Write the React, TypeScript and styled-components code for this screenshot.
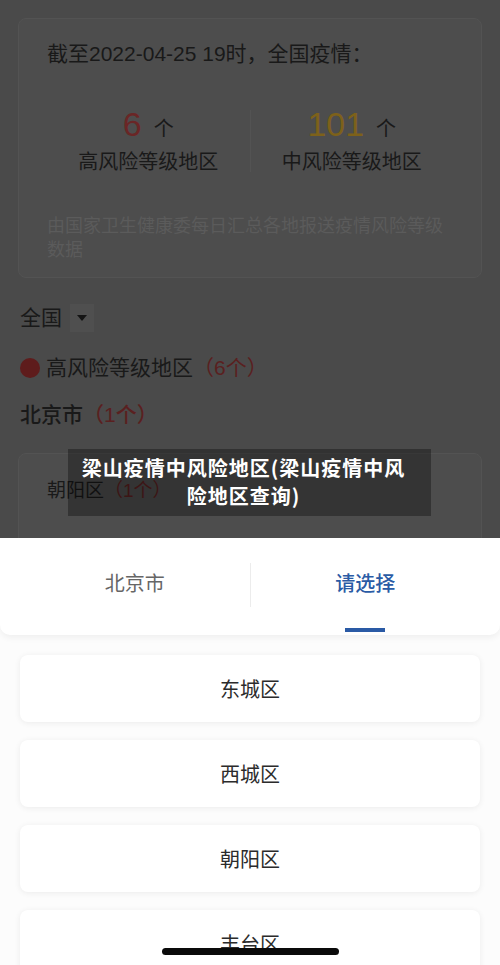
import styled, { createGlobalStyle } from 'styled-components';

const GlobalStyle = createGlobalStyle`
    html, body {
        margin: 0;
        padding: 0;
        background: #ffffff;
    }

    body {
        font-family: "Liberation Sans", "Noto Sans CJK SC", "Noto Sans", sans-serif;
    }
`;

const StyledPageRoot = styled.div`
    position: relative;
    width: 500px;
    height: 965px;
    overflow: hidden;

    display: flex;
    flex-direction: column;

    background-color: #ffffff;
`;

// dimmed page behind the sheet
const StyledDimmedArea = styled.div`
    position: relative;
    flex-shrink: 0;
    height: 538px;
    padding: 18px 18px 0;
    box-sizing: border-box;
    overflow: hidden;

    background-color: #4a4a4a;
    color: #191919;

    .summaryCard {
        height: 260px;
        padding: 20px 28px 0;
        box-sizing: border-box;

        border: 1px solid #535353;
        border-radius: 8px;
        background-color: #4d4d4d;

        &-title {
            font-size: 21px;
            line-height: 30px;
        }

        &-stats {
            margin-top: 36px;
            display: grid;
            grid-template-columns: 1fr 1px 1fr;
            align-items: center;
        }

        &-divider {
            height: 62px;
            background-color: #535353;
        }

        &-note {
            margin-top: 38px;
            color: #5b5b5b;
            font-size: 18px;
            line-height: 24px;
        }
    }

    .areaFilter {
        margin-top: 24px;
        display: flex;
        align-items: center;
        gap: 8px;

        font-size: 21px;
        line-height: 32px;
        padding-left: 2px;

        &-toggle {
            width: 24px;
            height: 28px;
            display: flex;
            align-items: center;
            justify-content: center;
            background-color: #4f4f4f;
        }
    }

    .levelRow {
        margin-top: 18px;
        display: flex;
        align-items: center;
        gap: 6px;
        padding-left: 2px;

        font-size: 21px;
        line-height: 32px;

        &-dot {
            width: 20px;
            height: 20px;
            border-radius: 50%;
            background-color: #5e1c1c;
        }
    }

    .cityRow {
        margin-top: 15px;
        padding-left: 2px;
        font-size: 21px;
        line-height: 32px;
        font-weight: 500;
    }

    .districtCard {
        margin-top: 22px;
        height: 120px;
        padding: 22px 28px 0;
        box-sizing: border-box;

        border: 1px solid #535353;
        border-radius: 8px;
        background-color: #4d4d4d;

        font-size: 19px;
        line-height: 30px;
    }
`;

const StyledCount = styled.span`
    color: #5a2020;
`;

const StyledStat = styled.div`
    display: flex;
    flex-direction: column;
    align-items: center;

    .stat-value {
        display: flex;
        align-items: baseline;
        gap: 12px;
        line-height: 38px;
    }

    .stat-number {
        color: ${({ color }) => color};
        font-size: 34px;
    }

    .stat-unit {
        font-size: 20px;
    }

    .stat-label {
        margin-top: 0;
        font-size: 20px;
        line-height: 28px;
    }
`;

const StyledCaption = styled.div`
    position: absolute;
    left: 68px;
    top: 449px;
    width: 363px;
    height: 67px;
    box-sizing: border-box;
    padding: 5px 12px 0 0;

    background-color: rgba(0, 0, 0, 0.32);
    color: #ffffff;
    text-align: center;
    font-family: "Noto Sans CJK SC", sans-serif;
    font-size: 20px;
    line-height: 28px;
    font-weight: 700;
    letter-spacing: 1px;
`;

const StyledSheet = styled.div`
    flex: 1;
    display: flex;
    flex-direction: column;
    background-color: #fcfcfc;
`;

const StyledTabBar = styled.div`
    height: 97px;
    padding: 0 20px;
    display: grid;
    grid-template-columns: 1fr 1px 1fr;
    align-items: center;

    background-color: #ffffff;
    border-radius: 0 0 10px 10px;
    box-shadow: 0 3px 6px rgba(0, 0, 0, 0.05);

    .tabBar-divider {
        height: 44px;
        margin-top: -4px;
        background-color: #ececec;
    }
`;

const StyledTab = styled.div<{ $active?: boolean }>`
    position: relative;
    height: 100%;
    display: flex;
    align-items: center;
    justify-content: center;
    padding-bottom: 8px;
    box-sizing: border-box;

    color: ${({ $active }) => ($active ? '#2a5ba5' : '#666666')};
    font-family: "Noto Sans CJK SC", sans-serif;
    font-size: 20px;
    font-weight: ${({ $active }) => ($active ? 500 : 400)};

    &::after {
        content: '';
        display: ${({ $active }) => ($active ? 'block' : 'none')};
        position: absolute;
        left: 50%;
        bottom: 3px;
        width: 40px;
        height: 4px;
        margin-left: -20px;
        background-color: #2a5aa5;
    }
`;

const StyledOptionList = styled.div`
    padding: 20px 20px 0;
    display: flex;
    flex-direction: column;
    gap: 18px;
`;

const StyledOption = styled.div`
    height: 67px;
    flex-shrink: 0;
    display: flex;
    align-items: center;
    justify-content: center;

    border-radius: 8px;
    background-color: #ffffff;
    box-shadow: 0 1px 6px rgba(0, 0, 0, 0.07);

    color: #2b2b2b;
    font-family: "Noto Sans CJK SC", sans-serif;
    font-size: 20px;
`;

const StyledHomeIndicator = styled.div`
    position: absolute;
    left: 162px;
    bottom: 10px;
    width: 177px;
    height: 7px;
    border-radius: 4px;
    background-color: #0a0a0a;
`;

const districts = ['东城区', '西城区', '朝阳区', '丰台区'];

function App() {
    return (
        <StyledPageRoot>
            <GlobalStyle />

            <StyledDimmedArea>
                <div className="summaryCard">
                    <div className="summaryCard-title">
                        截至2022-04-25 19时，全国疫情：
                    </div>

                    <div className="summaryCard-stats">
                        <StyledStat color="#6a2626">
                            <div className="stat-value">
                                <span className="stat-number">6</span>
                                <span className="stat-unit">个</span>
                            </div>
                            <div className="stat-label">高风险等级地区</div>
                        </StyledStat>

                        <div className="summaryCard-divider" />

                        <StyledStat color="#7d611a">
                            <div className="stat-value">
                                <span className="stat-number">101</span>
                                <span className="stat-unit">个</span>
                            </div>
                            <div className="stat-label">中风险等级地区</div>
                        </StyledStat>
                    </div>

                    <div className="summaryCard-note">
                        由国家卫生健康委每日汇总各地报送疫情风险等级数据
                    </div>
                </div>

                <div className="areaFilter">
                    全国
                    <span className="areaFilter-toggle">
                        <svg width="12" height="8" viewBox="0 0 12 8">
                            <path d="M1 1h10L6 7z" fill="#141414" />
                        </svg>
                    </span>
                </div>

                <div className="levelRow">
                    <span className="levelRow-dot" />
                    <span>
                        高风险等级地区<StyledCount>（6个）</StyledCount>
                    </span>
                </div>

                <div className="cityRow">
                    北京市<StyledCount>（1个）</StyledCount>
                </div>

                <div className="districtCard">
                    朝阳区<StyledCount>（1个）</StyledCount>
                </div>
            </StyledDimmedArea>

            <StyledCaption>
                梁山疫情中风险地区(梁山疫情中风
                <br />
                险地区查询)
            </StyledCaption>

            <StyledSheet>
                <StyledTabBar>
                    <StyledTab>北京市</StyledTab>
                    <div className="tabBar-divider" />
                    <StyledTab $active>请选择</StyledTab>
                </StyledTabBar>

                <StyledOptionList>
                    {districts.map((name) => (
                        <StyledOption key={name}>{name}</StyledOption>
                    ))}
                </StyledOptionList>
            </StyledSheet>

            <StyledHomeIndicator />
        </StyledPageRoot>
    );
}

export default App;
